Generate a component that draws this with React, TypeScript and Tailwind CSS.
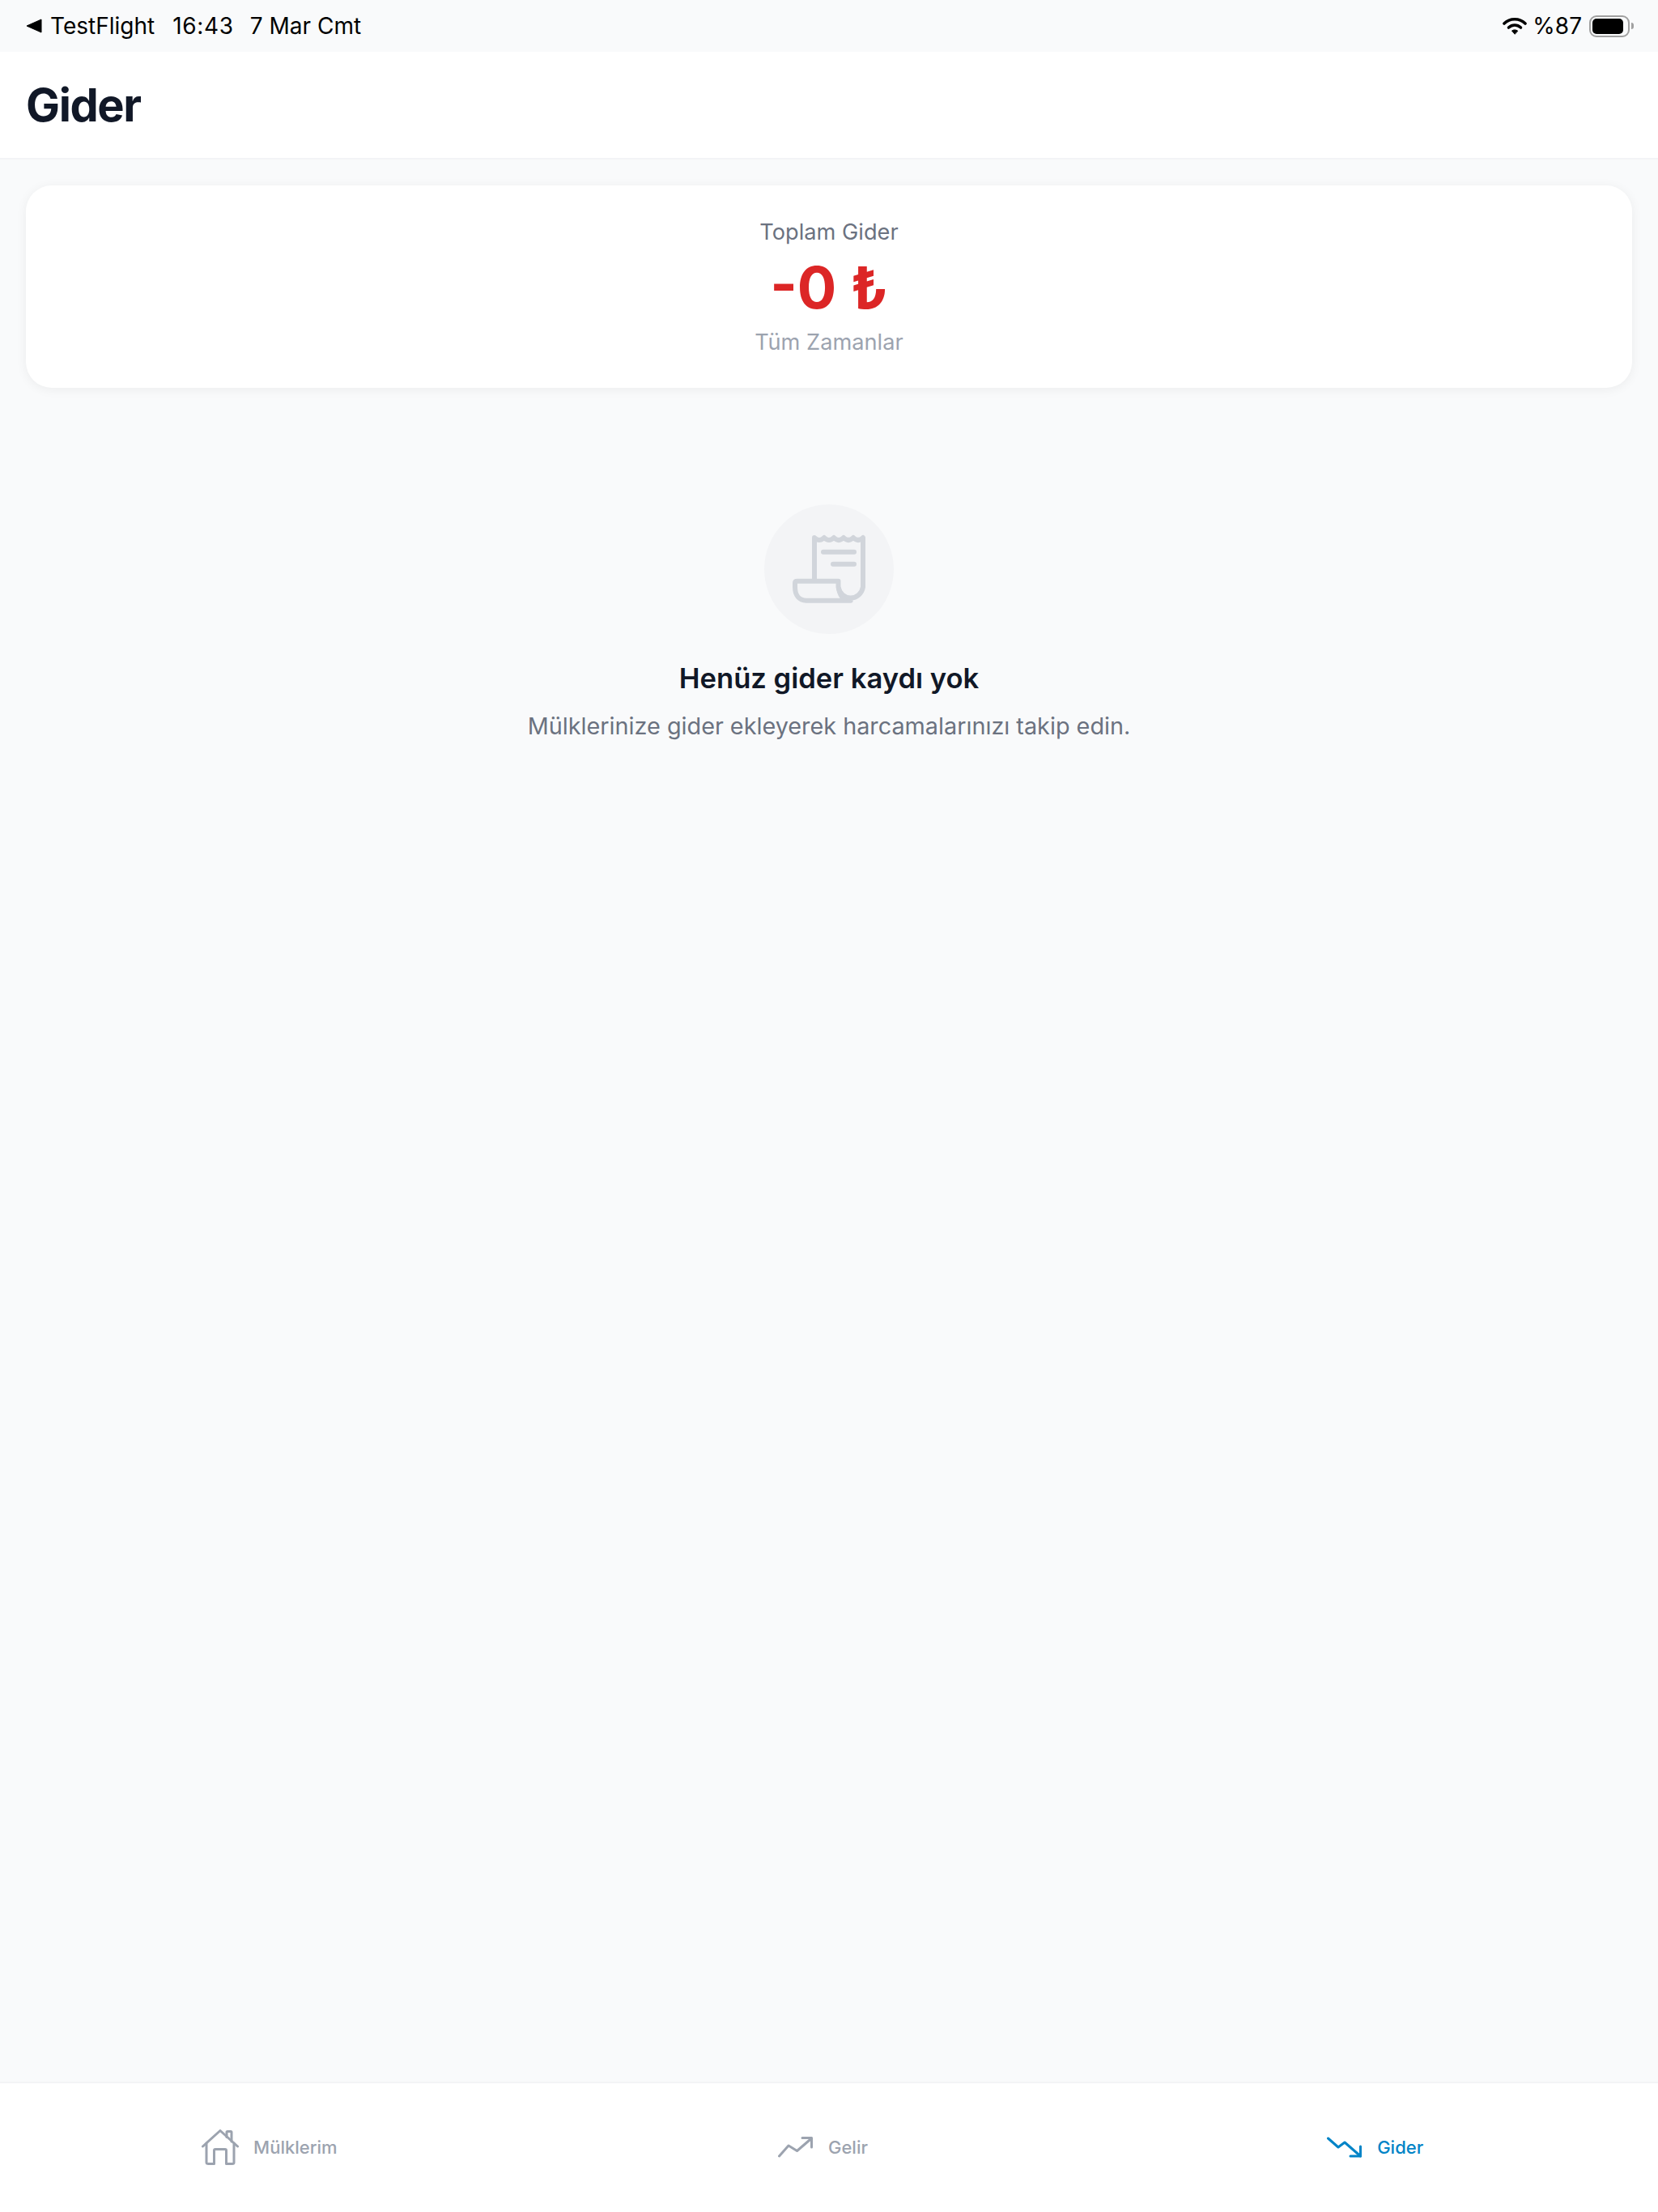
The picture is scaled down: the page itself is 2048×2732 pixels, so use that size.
export default function App() {
  return (
    <div className="flex h-[2732px] w-[2048px] flex-col overflow-hidden bg-[#f9fafb] font-['Inter',sans-serif]">
      <div className="flex h-[64px] shrink-0 items-center justify-between pl-[32px] pr-[30px] text-[28px] text-black">
        <div className="flex items-center">
          <svg width="20" height="18" viewBox="0 0 20 18" className="mr-[10px]">
            <path d="M19 1 V17 L1 9 Z" fill="#000" stroke="#000" strokeWidth="1" strokeLinejoin="round" />
          </svg>
          <span>TestFlight</span>
          <span className="ml-[22px] tracking-[0.7px]">16:43</span>
          <span className="ml-[20px]">7 Mar Cmt</span>
        </div>
        <div className="flex items-center">
          <svg width="30" height="22" viewBox="0 0 30 22" className="mr-[7px]" fill="none" stroke="#000" strokeLinecap="round">
            <path d="M2 8 C9 1 21 1 28 8" strokeWidth="3.6" />
            <path d="M7.5 13 C12 9 18 9 22.5 13" strokeWidth="3.6" />
            <path d="M15 21 L11.5 17 C13.5 15.5 16.5 15.5 18.5 17 Z" fill="#000" strokeWidth="1" />
          </svg>
          <span>%87</span>
          <div className="ml-[9px] flex items-center">
            <div className="flex h-[27px] w-[50px] items-center rounded-[9px] border-2 border-[#a0a0a0] p-[2px]">
              <div className="h-full w-[38px] rounded-[5px] bg-black" />
            </div>
            <div className="ml-[2px] h-[8px] w-[3px] rounded-r-full bg-[#a0a0a0]" />
          </div>
        </div>
      </div>

      <div className="flex h-[133px] shrink-0 items-center border-b-2 border-[#f3f4f6] bg-white px-[32px]">
        <h1 className="text-[56px] font-bold leading-none tracking-[-1.4px] text-[#111827]">Gider</h1>
      </div>

      <div className="flex flex-1 flex-col items-center px-[32px] pt-[32px]">
        <div className="flex h-[250px] w-full flex-col items-center justify-center rounded-[32px] bg-white pt-[1px] shadow-[0_2px_14px_rgba(0,0,0,0.06)]">
          <p className="text-[27.2px] leading-[40px] text-[#6b7280]">Toplam Gider</p>
          <p className="mt-[8px] text-[72px] font-bold leading-[80px] text-[#dc2626]">-0 ₺</p>
          <p className="mt-[8px] text-[27.2px] leading-[40px] text-[#9ca3af]">Tüm Zamanlar</p>
        </div>

        <div className="mt-[144px] flex h-[160px] w-[160px] items-center justify-center rounded-full bg-[#f3f4f6]">
          <svg width="96" height="96" viewBox="0 0 96 96" fill="none" stroke="#d1d5db" strokeWidth="6" strokeLinecap="round" strokeLinejoin="round">
            <path d="M30 62V9Q36 15 42 9Q48 15 54 9Q60 15 66 9Q72 15 78 9Q84 15 90 9V70A15.500 16.500 0 0 1 59.500 70V62.700H9Q6 62.700 6 65V70C6 80 11 86.700 20 86.700H74.700" />
            <path d="M60 72C61 78 63 82 67 85.500" />
            <path d="M41 26.700H79M53 41.700H79" />
          </svg>
        </div>
        <h2 className="mt-[31px] text-[34.6px] font-semibold leading-[46px] text-[#111827]">Henüz gider kaydı yok</h2>
        <p className="mt-[16px] text-[28.8px] leading-[42px] text-[#6b7280]">Mülklerinize gider ekleyerek harcamalarınızı takip edin.</p>
      </div>

      <div className="grid h-[161px] shrink-0 grid-cols-3 border-t-2 border-[#f3f4f6] bg-white pb-[2px]">
        <div className="flex items-center justify-center pr-[17px] text-[#9ca3af]">
          <svg width="46" height="44" viewBox="0 0 46 44" fill="none" stroke="currentColor" strokeWidth="3" strokeLinecap="round" strokeLinejoin="round" className="mr-[18px]">
            <path d="M1.500 21 L23 1.500 L44.500 21" />
            <path d="M6 17 V41 C6 42 7 42.500 8 42.500 H15.500 V26 C15.500 25 16 24.500 17 24.500 H29 C30 24.500 30.500 25 30.500 26 V42.500 H38 C39 42.500 40 42 40 41 V17" />
            <path d="M31 9.500 V3.500 C31 3 31.500 2.500 32 2.500 H36 C36.500 2.500 37 3 37 3.500 V15" />
          </svg>
          <span className="text-[22px] font-medium leading-none">Mülklerim</span>
        </div>
        <div className="flex items-center justify-center pr-[15px] text-[#9ca3af]">
          <svg width="44" height="26" viewBox="0 0 44 26" fill="none" stroke="currentColor" strokeWidth="3" strokeLinecap="round" strokeLinejoin="round" className="mr-[18px]">
            <path d="M1.500 24 L13 11 L23.500 17.500 L41.500 2" />
            <path d="M30 1.500 H41.500 V13" />
          </svg>
          <span className="text-[22px] font-medium leading-none">Gelir</span>
        </div>
        <div className="flex items-center justify-center pr-[16px] text-[#0284c7]">
          <svg width="44" height="26" viewBox="0 0 44 26" fill="none" stroke="currentColor" strokeWidth="3" strokeLinecap="round" strokeLinejoin="round" className="mr-[18px]">
            <path d="M1.500 2 L14 13 L22 7 L41.500 24" />
            <path d="M29 24 H41.500 V12" />
          </svg>
          <span className="text-[22px] font-medium leading-none">Gider</span>
        </div>
      </div>
    </div>
  );
}
